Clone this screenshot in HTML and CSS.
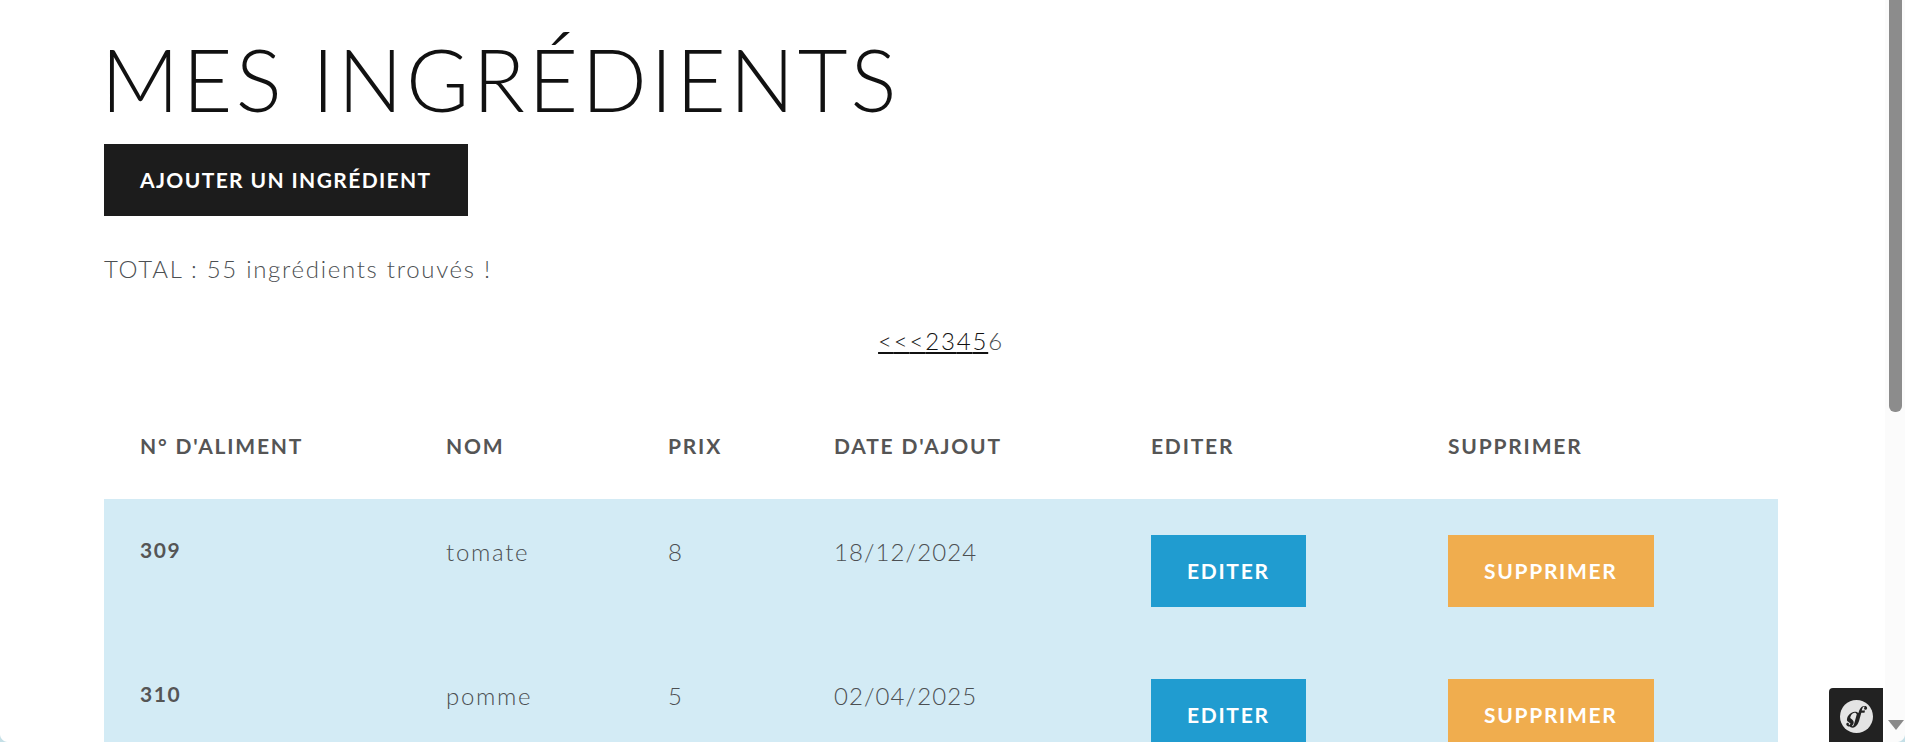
FILE: index.html
```html
<!DOCTYPE html>
<html lang="fr">
<head>
<meta charset="utf-8">
<title>Mes ingrédients</title>
<link rel="stylesheet" href="styles.css">
</head>
<body>
<main class="page">
  <h1 class="title">MES INGRÉDIENTS</h1>
  <a class="btn btn-dark" href="#">AJOUTER UN INGRÉDIENT</a>
  <p class="total">TOTAL : 55 ingrédients trouvés !</p>
  <nav class="pagination"><a href="#">&lt;</a><a href="#">&lt;</a><a href="#">&lt;</a><a href="#">2</a><a href="#">3</a><a href="#">4</a><a href="#">5</a><span>6</span></nav>
  <table class="table">
    <thead>
      <tr><th class="c1">N° D'ALIMENT</th><th class="c2">NOM</th><th class="c3">PRIX</th><th class="c4">DATE D'AJOUT</th><th class="c5">EDITER</th><th>SUPPRIMER</th></tr>
    </thead>
    <tbody>
      <tr><th>309</th><td>tomate</td><td>8</td><td class="date">18/12/2024</td><td class="action"><a class="btn btn-blue" href="#">EDITER</a></td><td class="action"><a class="btn btn-orange" href="#">SUPPRIMER</a></td></tr>
      <tr><th>310</th><td>pomme</td><td>5</td><td class="date">02/04/2025</td><td class="action"><a class="btn btn-blue" href="#">EDITER</a></td><td class="action"><a class="btn btn-orange" href="#">SUPPRIMER</a></td></tr>
    </tbody>
  </table>
</main>
<div class="sf-toolbar"><svg class="sf-logo" viewBox="0 0 24 24"><circle cx="12" cy="12" r="12" fill="#e4e4e4"/><path fill="#222" d="M18.6 4.200c-2.200-.1-3.900 1.300-4.700 3.600l-.5 1.600c-1-.8-1.800-1-2.700-.9-2.800.4-4.900 2.500-5.500 4.700-.3 1.100-.2 1.800.5 2.400.6.500 1.400 1 1.800 1.500.3.300.1.700-.2.900-.3.200-.7.200-1-.1.500-.6.100-1.500-.8-1.400-.9.100-1.200 1-.7 1.800.8 1.100 2.600 1.200 3.700.4 1.400-1 1.900-2.500 1.100-3.700-.4-.6-1.100-1-1.700-1.500-.5-.4-.5-.8-.3-1.400.5-1.300 1.500-2.600 2.900-2.800.7-.1 1.100.3 1.700 1l-1.100 4c-.6 2.400-1.100 4.300-1.800 4.700-.3.100-.5 0-.5-.2.100-.2.300-.4.300-.7 0-.7-.6-1-1.200-.9-.7.100-1.100.8-.9 1.500.2 1 1.200 1.400 2.100 1.400 3.100-.1 4.400-3.500 5.100-6.100l1.300-4.800h2.300l.4-1.600h-2.400c.4-1.500.8-2.700 1.700-2.800.3 0 .4.100.3.400-.2.300-.4.600-.3 1 .1.700.7 1 1.300.9.700-.1 1-.8.900-1.400-.2-1.100-1.200-1.500-2.100-1.500z"/></svg></div>
<div class="scrollbar"><div class="thumb"></div><div class="arrow"></div></div>
<div class="corner corner-left"></div>
<div class="corner corner-right"></div>
</body>
</html>
```
FILE: styles.css
```css
* { box-sizing: border-box; }
html, body { margin: 0; height: 742px; overflow: hidden; background: #fff; }
body { font-family: "Lato", "Noto Sans", sans-serif; color: #4c4f52; font-weight: 300; letter-spacing: 1.7px; }
.page { padding: 31px 127px 0 104px; }
.title { margin: 0 0 17px -3px; font-size: 86px; line-height: 96px; font-weight: 300; color: #111; letter-spacing: 3.4px; }
.btn { display: inline-block; height: 72px; line-height: 71px; padding: 0 36px; font-size: 21px; font-weight: 700; color: #fff; text-decoration: none; letter-spacing: 1.7px; }
.btn-dark { background: #1c1c1c; letter-spacing: 1.38px; }
.btn-blue { background: #209cd0; }
.btn-orange { background: #f0ad4e; }
.total { margin: 37px 0 0; font-size: 24px; line-height: 32px; }
.pagination { margin-top: 40px; text-align: center; font-size: 24px; line-height: 32px; letter-spacing: 1.8px; }
.pagination a { color: #111; }
.table { margin-top: 41px; width: 100%; border-collapse: collapse; table-layout: fixed; }
.table th, .table td { padding: 36px; text-align: left; font-size: 24px; line-height: 32px; vertical-align: top; }
.table thead th { font-size: 21px; font-weight: 700; padding: 32px 36px 37px; letter-spacing: 1.8px; color: #555; }
.table tbody tr { background: #d3ebf5; height: 144px; }
.table tbody th { font-size: 21px; font-weight: 700; line-height: 30px; letter-spacing: 1.6px; color: #555; }
.table tbody td { padding-top: 37px; font-weight: 300; }
.table tbody .date { letter-spacing: 1.1px; }
.table tbody .action { padding-top: 36px; }
.c1 { width: 306px; }
.c2 { width: 222px; }
.c3 { width: 166px; }
.c4 { width: 317px; }
.c5 { width: 297px; }
.sf-toolbar { position: absolute; left: 1829px; top: 688px; width: 54px; height: 54px; background: #222; border-top-left-radius: 4px; display: flex; align-items: center; justify-content: center; }
.sf-logo { width: 33px; height: 33px; margin-top: 2px; }
.scrollbar { position: absolute; right: 0; top: 0; bottom: 0; width: 20px; background: #fbfbfb; }
.thumb { position: absolute; left: 4px; top: -10px; width: 13px; height: 422px; background: #8c8c8c; border-radius: 0 0 6px 6px; }
.arrow { position: absolute; left: 3px; top: 720px; border-left: 8px solid transparent; border-right: 8px solid transparent; border-top: 10px solid #8a8a8a; }
.corner { position: absolute; bottom: 0; width: 8px; height: 8px; }
.corner-left { left: 0; background: radial-gradient(circle at 100% 0, transparent 7.5px, #c4dfe6 8.5px); }
.corner-right { right: 0; background: radial-gradient(circle at 0 0, transparent 7.5px, #c4dfe6 8.5px); }
```
